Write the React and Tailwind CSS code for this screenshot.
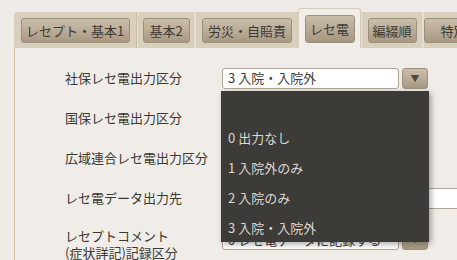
const tabs = [
  { label: "レセプト・基本1", slot: "w-[123px]", btn: "w-[109px]" },
  { label: "基本2", slot: "w-[58px]", btn: "w-[47px]" },
  { label: "労災・自賠責", slot: "w-[103px]", btn: "w-[90px]" },
  { label: "レセ電", slot: "w-[63px]", btn: "w-[50px]", active: true },
  { label: "編綴順", slot: "w-[62px]", btn: "w-[49px]" },
  { label: "特別", slot: "w-[60px]", btn: "w-[60px]" },
];

const options = ["", "0 出力なし", "1 入院外のみ", "2 入院のみ", "3 入院・入院外"];

const Select = ({ value, className = "" }) => (
  <div className={`flex shrink-0 gap-[3px] ${className}`}>
    <div className="w-[177px] h-[21px] bg-white border border-[#b3a793] rounded-[3px] pl-[5px] flex items-center text-[13px] text-[#3c3b37] whitespace-nowrap overflow-hidden">
      {value}
    </div>
    <div className="w-[26px] h-[21px] rounded-[3px] border border-[#9e917c] bg-gradient-to-b from-[#cbbfac] to-[#a89984] flex items-center justify-center">
      <span className="text-[9px] text-[#4f4a42] leading-none">▼</span>
    </div>
  </div>
);

const Row = ({ label, children }) => (
  <div className="flex items-center h-[40px]">
    <div className="w-[157px] shrink-0 text-[13px] text-[#3a3935] whitespace-nowrap">{label}</div>
    {children}
  </div>
);

export default function App() {
  return (
    <div
      className="w-[457px] h-[260px] overflow-hidden bg-[#efebe6] relative"
      style={{ fontFamily: "'Noto Sans CJK JP', 'Liberation Sans', sans-serif" }}
    >
      <div className="pt-[8px] pl-[14px]">
        {/* tab bar */}
        <div className="flex items-end h-[40px] whitespace-nowrap">
          {tabs.map((t, i) =>
            t.active ? (
              <div
                key={t.label}
                className={`${t.slot} shrink-0 h-[40px] bg-[#f1ede8] rounded-t-[3px] border border-b-0 border-[#d6ccba] flex justify-center pt-[6px]`}
              >
                <div className={`${t.btn} h-[28px] rounded-[3px] border border-[#9d907b] bg-gradient-to-b from-[#c9bdaa] to-[#a69782] flex items-center justify-center text-[13px] text-[#3c3a35]`}>
                  {t.label}
                </div>
              </div>
            ) : (
              <div
                key={t.label}
                className={`${t.slot} shrink-0 h-[36px] bg-[#d8cfbd] flex justify-center pt-[6px] ${i === 0 ? "rounded-tl-[3px]" : "border-l border-[#e6dfd1]"} ${tabs[i + 1]?.active || i === tabs.length - 1 ? "" : "border-r border-[#c8bca7]"}`}
              >
                <div className={`${t.btn} shrink-0 h-[25px] rounded-[3px] border border-[#9d907b] bg-gradient-to-b from-[#cbbfac] to-[#a89984] flex items-center justify-center text-[13px] text-[#3c3a35]`}>
                  {t.label}
                </div>
              </div>
            )
          )}
        </div>

        {/* page content */}
        <div className="h-[212px] border-l border-[#cbbfaa] bg-[#f0ece7] pt-[10px] pl-[50px]">
          <Row label="社保レセ電出力区分">
            <Select value="3 入院・入院外" />
          </Row>
          <Row label="国保レセ電出力区分">
            <Select value="3 入院・入院外" />
          </Row>
          <Row label="広域連合レセ電出力区分">
            <Select value="3 入院・入院外" />
          </Row>
          <Row label="レセ電データ出力先">
            <div className="w-[260px] shrink-0 h-[21px] bg-white border border-[#b3a793] rounded-[3px]" />
          </Row>
          <div className="flex items-start">
            <div className="w-[157px] shrink-0 pt-[9px] text-[13px] leading-[17px] text-[#3a3935] whitespace-nowrap">
              レセプトコメント
              <br />
              (症状詳記)記録区分
            </div>
            <Select value="0 レセ電データに記録する" className="mt-[11px]" />
          </div>
        </div>
      </div>

      {/* open dropdown list */}
      <div className="absolute left-[221px] top-[91px] w-[208px] h-[151px] bg-[#3c3b37] pt-[2px] shadow-[2px_2px_6px_rgba(0,0,0,0.35)]">
        {options.map((o, i) => (
          <div key={i} className="h-[30px] pl-[7px] flex items-center text-[13px] text-[#dcd8cf]">
            {o}
          </div>
        ))}
      </div>
    </div>
  );
}
